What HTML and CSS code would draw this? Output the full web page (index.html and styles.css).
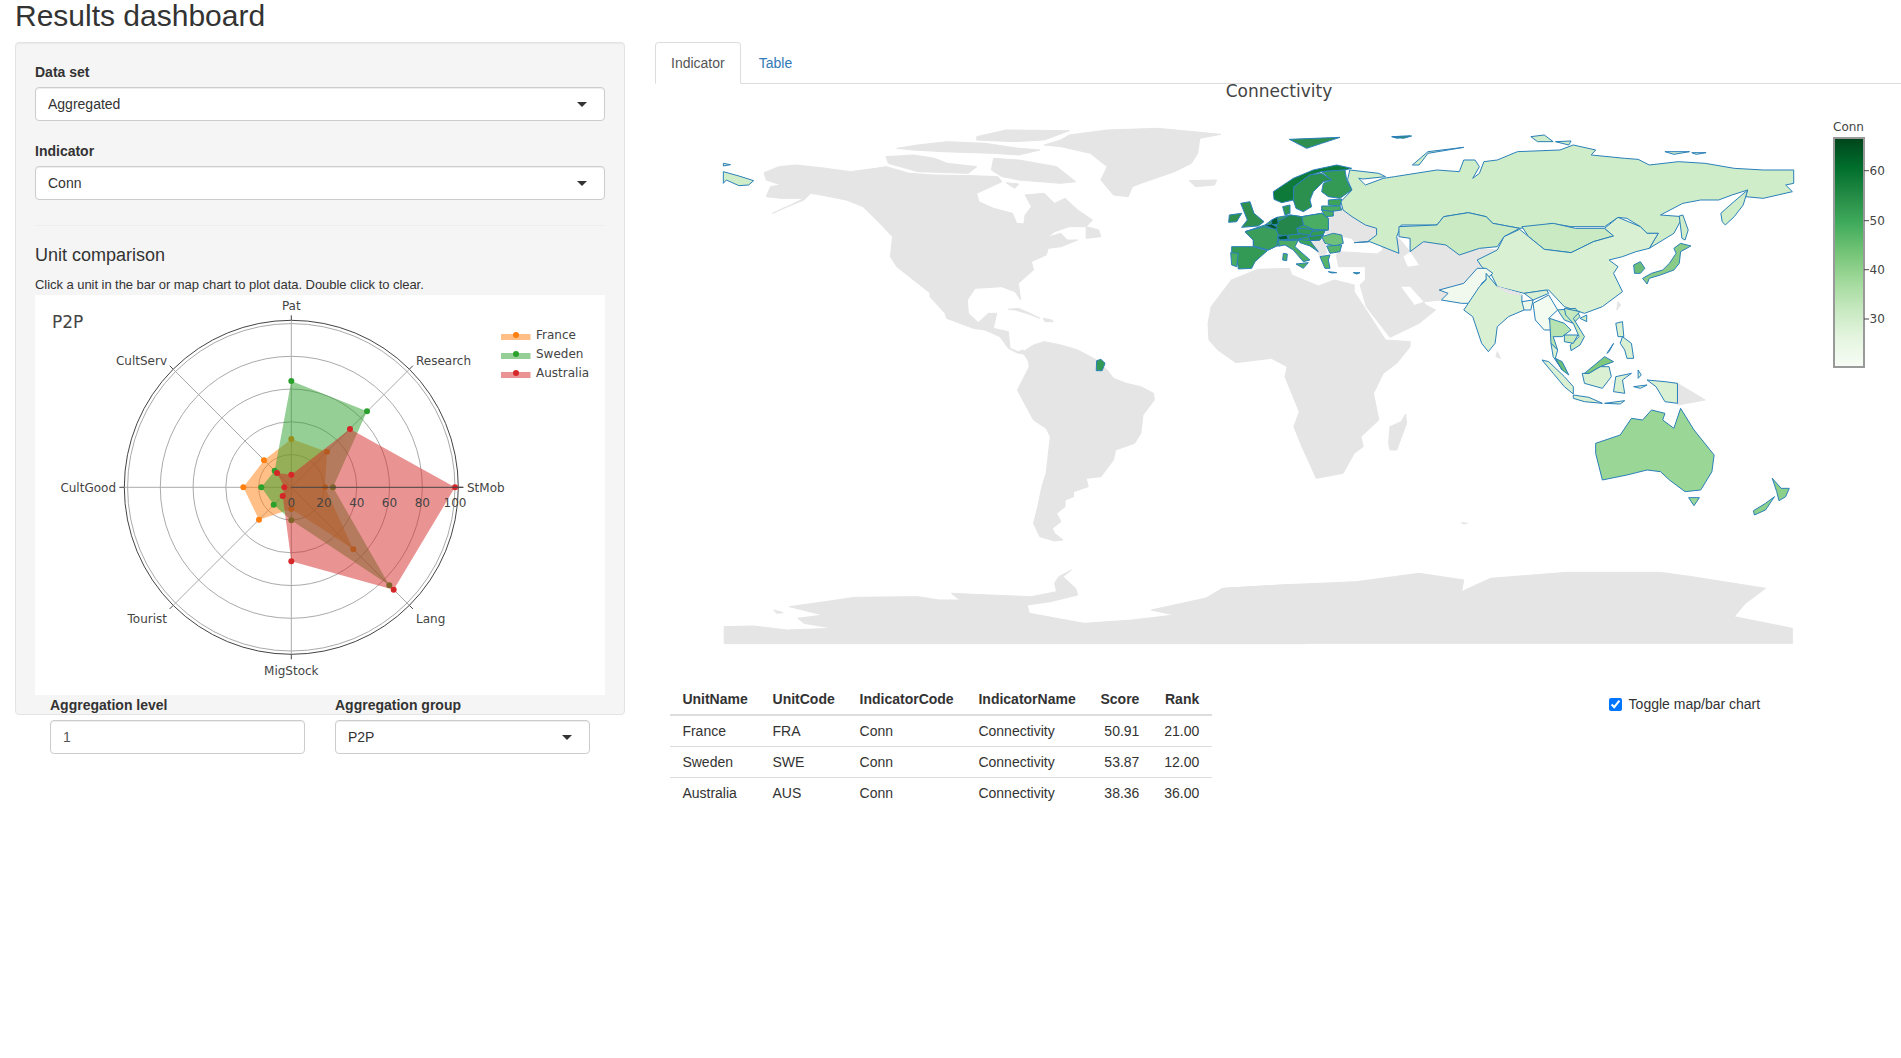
FILE: index.html
```html
<!DOCTYPE html>
<html lang="en">
<head>
<meta charset="utf-8">
<title>Results dashboard</title>
<link rel="stylesheet" href="styles.css">
</head>
<body>
<h2 class="page-title">Results dashboard</h2>
<div class="columns">
  <aside class="side-col">
    <div class="well">
      <div class="form-group">
        <label class="field-label">Data set</label>
        <div class="select-box"><span>Aggregated</span><i class="caret"></i></div>
      </div>
      <div class="form-group">
        <label class="field-label">Indicator</label>
        <div class="select-box"><span>Conn</span><i class="caret"></i></div>
      </div>
      <hr class="divider">
      <h4 class="section-title">Unit comparison</h4>
      <p class="hint">Click a unit in the bar or map chart to plot data. Double click to clear.</p>
      <svg class="radar" viewBox="35 295 570 400" width="570" height="400" role="img" aria-label="Radar chart">
        <rect class="plot-bg" x="35" y="295" width="570" height="400"/>
        <text class="plot-title" x="52" y="328">P2P</text>
        <circle class="grid" cx="291.3" cy="487.3" r="32.7"/>
        <circle class="grid" cx="291.3" cy="487.3" r="65.5"/>
        <circle class="grid" cx="291.3" cy="487.3" r="98.2"/>
        <circle class="grid" cx="291.3" cy="487.3" r="131"/>
        <circle class="grid" cx="291.3" cy="487.3" r="163.7"/>
        <circle class="ring" cx="291.3" cy="487.3" r="167"/>
        <path class="grid" d="M291.3 320.3V654.3M124.3 487.3H291.3M173.2 369.2L409.4 605.4M173.2 605.4L409.4 369.2"/>
        <path class="tick" d="M291.3 315.3V320.3M291.3 654.3V659.3M119.3 487.3H124.3M458.3 487.3H463.3M173.2 369.2L169.7 365.7M409.4 369.2L412.9 365.7M173.2 605.4L169.7 608.9M409.4 605.4L412.9 608.9"/>
        <g transform="translate(100 360) scale(.33333)">
          <polygon class="fill-fr" points="675,382 760,568 574,447 477,479 430,382 492,301 574,237 681,275"/>
          <g class="dots-fr">
            <circle cx="675" cy="382" r="9"/><circle cx="760" cy="568" r="9"/><circle cx="574" cy="447" r="9"/><circle cx="477" cy="479" r="9"/><circle cx="430" cy="382" r="9"/><circle cx="492" cy="301" r="9"/><circle cx="574" cy="237" r="9"/><circle cx="681" cy="275" r="9"/>
          </g>
          <polygon class="fill-se" points="699,382 868,676 574,481 521,434 484,382 524,332 574,63 801,154"/>
          <g class="dots-se">
            <circle cx="699" cy="382" r="9"/><circle cx="868" cy="676" r="9"/><circle cx="574" cy="481" r="9"/><circle cx="521" cy="434" r="9"/><circle cx="484" cy="382" r="9"/><circle cx="524" cy="332" r="9"/><circle cx="574" cy="63" r="9"/><circle cx="801" cy="154" r="9"/>
          </g>
          <polygon class="fill-au" points="1065,382 881,689 574,604 548,408 553,382 531,339 574,344 750,207"/>
          <g class="dots-au">
            <circle cx="1065" cy="382" r="9"/><circle cx="881" cy="689" r="9"/><circle cx="574" cy="604" r="9"/><circle cx="548" cy="408" r="9"/><circle cx="553" cy="382" r="9"/><circle cx="531" cy="339" r="9"/><circle cx="574" cy="344" r="9"/><circle cx="750" cy="207" r="9"/>
          </g>
        </g>
        <path class="axis" d="M291.3 487.3H463.3"/>
        <g class="tick-labels">
          <text x="291.3" y="507">0</text><text x="324" y="507">20</text><text x="356.8" y="507">40</text><text x="389.5" y="507">60</text><text x="422.3" y="507">80</text><text x="455" y="507">100</text>
        </g>
        <g class="axis-labels">
          <text class="mid" x="291.3" y="310">Pat</text>
          <text x="416" y="365">Research</text>
          <text x="467" y="491.5">StMob</text>
          <text x="416" y="623">Lang</text>
          <text class="mid" x="291.3" y="675">MigStock</text>
          <text class="end" x="167" y="623">Tourist</text>
          <text class="end" x="116" y="491.5">CultGood</text>
          <text class="end" x="167" y="365">CultServ</text>
        </g>
        <rect class="fill-fr" x="501" y="334" width="29.5" height="6"/><circle class="dots-fr" cx="516" cy="335" r="3"/>
        <text class="legend-text" x="536" y="339">France</text>
        <rect class="fill-se" x="501" y="353" width="29.5" height="6"/><circle class="dots-se" cx="516" cy="354" r="3"/>
        <text class="legend-text" x="536" y="358">Sweden</text>
        <rect class="fill-au" x="501" y="372" width="29.5" height="6"/><circle class="dots-au" cx="516" cy="373" r="3"/>
        <text class="legend-text" x="536" y="377">Australia</text>
      </svg>
      <div class="agg-row">
        <div class="agg-field">
          <label class="field-label">Aggregation level</label>
          <input class="text-input" type="text" value="1">
        </div>
        <div class="agg-field">
          <label class="field-label">Aggregation group</label>
          <div class="select-box"><span>P2P</span><i class="caret"></i></div>
        </div>
      </div>
    </div>
  </aside>
  <main class="main-col">
    <ul class="tabs">
      <li class="tab tab-active">Indicator</li>
      <li class="tab tab-link">Table</li>
    </ul>
    <svg class="map" viewBox="655 79 1246 605" width="1246" height="605" role="img" aria-label="World map of Connectivity">
      <defs>
        <linearGradient id="greens" x1="0" y1="1" x2="0" y2="0">
          <stop offset="0" stop-color="#f7fcf5"/><stop offset=".125" stop-color="#e5f5e0"/><stop offset=".25" stop-color="#c7e9c0"/><stop offset=".375" stop-color="#a1d99b"/><stop offset=".5" stop-color="#74c476"/><stop offset=".625" stop-color="#41ab5d"/><stop offset=".75" stop-color="#238b45"/><stop offset=".875" stop-color="#006d2c"/><stop offset="1" stop-color="#00441b"/>
        </linearGradient>
      </defs>
      <text class="map-title" x="1279" y="97">Connectivity</text>

      <!-- Americas, Greenland, west Antarctica -->
      <g transform="translate(640 30) scale(.42088 .33333)">
        <polygon class="land" points="295,428 330,410 370,405 430,413 500,425 560,415 585,410 640,430 700,435 790,437 850,440 860,455 800,490 805,515 840,535 885,550 895,580 912,582 915,555 930,530 915,495 960,490 985,520 1010,505 1040,540 1075,570 1060,590 1020,590 985,605 968,622 1000,610 1015,630 1040,630 1000,650 970,655 965,675 930,695 935,720 700,800 650,750 610,710 595,680 600,620 570,580 530,530 490,510 430,495 405,490 390,510 340,535 315,550 350,530 390,505 335,505 300,500 310,470 335,465 300,450"/>
        <polygon class="land" points="1020,315 1110,300 1230,295 1380,313 1330,325 1325,370 1310,400 1270,425 1190,460 1170,470 1160,500 1125,495 1095,450 1110,410 1070,370 1000,350 960,345 1000,330"/>
        <polygon class="land" points="800,320 870,300 1020,302 960,330 890,335 800,330"/>
        <polygon class="land" points="610,355 660,345 730,335 820,340 900,355 950,360 900,375 840,370 720,365 650,360"/>
        <polygon class="land" points="585,380 650,375 700,385 730,400 800,410 780,430 660,425 590,400"/>
        <polygon class="land" points="840,385 900,390 990,410 1035,455 1000,460 950,455 900,450 860,440 835,420"/>
        <polygon class="land" points="870,458 900,462 890,475"/>
        <polygon class="land" points="1305,452 1370,450 1365,465 1320,470"/>
        <polygon class="land" points="1060,590 1090,600 1095,620 1060,625"/>
        <polygon class="light" points="198,425 235,438 270,452 258,465 235,467 205,450 198,460"/>
        <polygon class="light" points="198,400 215,404 198,408"/>
      </g>
      <g transform="translate(640 340) scale(.42088 .33333)">
        <polygon class="land" points="905,40 935,15 960,5 1000,15 1040,30 1085,60 1110,90 1125,115 1155,130 1190,140 1220,160 1222,180 1195,225 1190,280 1175,310 1130,330 1125,360 1095,410 1060,415 1065,440 1030,455 1030,470 1010,480 1010,500 990,520 1000,545 980,565 985,580 1005,600 985,603 950,590 935,550 945,500 955,440 965,400 975,290 965,265 935,240 905,170 897,150 925,80 920,45"/>
        <polygon class="land" points="200,911 200,860 270,858 350,870 460,865 390,850 375,835 435,825 355,800 440,785 510,772 660,770 710,780 760,780 740,760 830,765 930,770 990,755 985,730 995,710 1025,690 1005,710 1035,745 1040,765 975,785 920,795 925,820 1055,850 1170,840 1270,825 1215,810 1360,770 1390,745 1530,735 1580,735 1580,911"/>
        <polygon class="land" points="318,810 340,818 325,820"/>
        <polygon class="coast" fill="#329a54" points="1085,62 1095,58 1105,70 1098,92 1084,92"/>
      </g>
      <!-- Central America -->
      <g transform="translate(930 270) scale(.33333)">
        <polygon class="land" points="0,0 310,0 265,40 272,90 255,65 215,50 135,55 112,90 115,130 145,158 175,130 200,130 190,175 235,185 240,235 265,245 280,240 300,280 280,250 265,250 235,235 210,200 165,180 130,175 50,145 45,130 0,80"/>
        <polygon class="land" points="235,118 265,115 300,130 330,145 290,130 255,120"/>
        <polygon class="land" points="340,145 365,150 370,155 345,155"/>
      </g>

      <!-- Africa, Asia base, Oceania, Antarctica east -->
      <g transform="translate(1200 110) scale(.44707 .33333)">
        <polygon class="land" points="18,640 25,590 70,510 130,478 200,475 205,495 265,528 300,510 345,525 345,545 415,690 470,695 470,710 440,760 410,790 388,850 400,930 360,980 365,1010 345,1030 320,1090 260,1105 250,1075 228,1010 210,950 222,905 190,800 195,770 160,745 80,758 40,720 20,690"/>
        <polygon class="land" points="460,912 462,940 440,1020 425,1020 422,1000 425,950 450,935"/>
        <polygon class="land" points="320,290 345,320 395,355 400,380 445,385 470,425 500,395 550,405 580,435 625,415 665,420 620,450 630,470 620,480 590,520 535,540 555,550 540,570 500,575 505,585 527,600 490,640 425,682 372,590 358,525 370,510 370,470 310,470 305,435 310,425 350,428 395,432 410,420 400,395 345,395 340,385 280,370 265,340 285,305"/>
        <polygon class="water" points="455,440 470,425 490,465 465,470"/>
        <polygon class="water" points="450,530 470,530 500,575 480,585"/>
        <polygon class="land" points="665,725 672,745 662,740"/>
        <polygon class="land" points="935,575 941,585 932,600"/>
        <polygon class="land" points="1068,820 1130,870 1068,885"/>
        <polygon class="land" points="0,1475 50,1435 180,1425 350,1415 490,1390 590,1410 585,1445 650,1405 820,1387 1030,1387 1100,1400 1265,1435 1220,1480 1195,1520 1325,1555 1325,1600 0,1600"/>
        <polygon class="land" points="585,1238 598,1240 590,1242"/>
      </g>
      <g transform="translate(1190 120) scale(.33333)">
        <polygon class="land" points="345,360 395,350 405,370 410,400 390,410 385,400 360,375"/>
      </g>

      <!-- Asia, coloured -->
      <g transform="translate(1200 110) scale(.44707 .33333)">
        <polygon class="coast" fill="#d0edca" points="335,180 400,190 415,200 365,207 355,205 370,225 410,205 435,200 530,180 580,185 590,150 615,150 625,170 610,205 625,190 635,155 665,150 710,125 805,120 835,105 885,120 875,135 950,145 980,148 1005,165 1070,155 1130,160 1195,175 1260,180 1328,180 1328,220 1310,225 1325,245 1260,265 1220,260 1225,240 1190,255 1160,270 1120,270 1080,280 1030,315 1080,320 1060,370 1005,415 1025,370 1000,370 985,350 955,325 935,322 905,350 830,350 785,340 760,350 715,355 655,340 640,320 600,308 545,320 530,345 450,345 440,380 445,430 380,395 345,398 375,395 395,375 395,355 370,345 340,320 320,300 315,275 340,240 330,210"/>
        <polygon class="coast" fill="#c9eac2" points="445,350 530,345 545,320 600,308 640,320 655,340 715,355 680,380 665,410 625,415 580,435 550,405 500,395 470,425 470,385 445,380"/>
        <polygon class="coast" fill="#c9eac2" points="720,350 790,340 840,355 905,355 925,378 880,395 830,428 770,418 735,380"/>
        <polygon class="coast" fill="#d9f0d3" points="715,358 735,380 770,418 830,428 880,395 925,378 905,355 935,322 985,350 1000,370 1025,370 1005,415 975,425 945,440 915,450 935,470 925,490 945,545 900,590 860,610 815,590 780,540 725,550 665,530 650,490 630,470 620,450 665,420 680,380"/>
        <polygon class="coast" fill="#f1f9ee" points="535,540 590,520 620,475 640,475 655,490 630,520 610,580 585,580 540,570 555,550"/>
        <polygon class="coast" fill="#d9f0d3" points="640,490 665,530 720,555 720,575 745,575 725,600 690,620 665,650 660,700 645,725 630,700 610,620 590,600 600,580 625,530 640,510"/>
        <polygon class="land" points="665,530 715,550 720,555 690,550"/>
        <polygon class="coast" fill="#eef8ea" points="720,575 745,570 740,600 725,600"/>
        <polygon class="coast" fill="#d9f0d3" points="725,550 775,540 780,550 745,570"/>
        <polygon class="coast" fill="#f3faf0" points="745,580 780,555 800,600 780,625 790,660 770,660 750,630"/>
        <polygon class="coast" fill="#b7e2b1" points="782,625 815,640 830,660 810,680 790,680 800,720 785,700"/>
        <polygon class="coast" fill="#c7e9c0" points="800,600 840,595 850,620 835,640 815,630"/>
        <polygon class="coast" fill="#c7e9c0" points="815,595 850,605 835,625 860,680 850,705 830,722 828,705 848,680 835,640 818,615"/>
        <polygon class="coast" fill="#c7e9c0" points="815,675 845,675 835,700 815,695"/>
        <polygon class="coast" fill="#d9f0d3" points="785,700 800,720 795,745 810,780 790,740"/>
        <polygon class="coast" fill="#6dbf78" points="795,745 810,755 825,795 810,780"/>
        <polygon class="coast" fill="#d9f0d3" points="765,750 780,755 815,800 835,830 835,852 815,830 790,790"/>
        <polygon class="coast" fill="#d9f0d3" points="835,855 870,862 900,880 860,875 835,865"/>
        <polygon class="coast" fill="#d9f0d3" points="855,790 870,790 895,770 915,770 920,800 900,835 860,820"/>
        <polygon class="coast" fill="#7fc97f" points="860,790 905,740 925,755 895,770 870,790"/>
        <polygon class="coast" fill="#d9f0d3" points="930,800 965,790 945,810 950,850 925,845"/>
        <polygon class="coast" fill="#d9f0d3" points="930,640 945,635 948,680 935,680"/>
        <polygon class="coast" fill="#d9f0d3" points="945,680 965,700 970,745 955,745 950,720 940,700"/>
        <polygon class="coast" fill="#d9f0d3" points="1000,810 1040,815 1068,820 1068,880 1040,875 1020,830"/>
        <polygon class="coast" fill="#d9f0d3" points="910,730 925,700 915,725"/>
        <polygon class="coast" fill="#d9f0d3" points="905,880 950,872 940,882"/>
        <polygon class="coast" fill="#d9f0d3" points="970,830 1000,825 985,835"/>
        <polygon class="coast" fill="#d9f0d3" points="980,780 987,795 980,805"/>
        <polygon class="coast" fill="#8acb88" points="990,505 1010,490 1035,480 1050,460 1065,430 1060,415 1075,400 1098,408 1075,425 1072,460 1060,480 1030,495 1005,505 1000,522"/>
        <polygon class="coast" fill="#d0edca" points="1072,318 1080,315 1092,360 1085,390 1078,385"/>
        <polygon class="coast" fill="#6bbd78" points="970,465 985,455 995,475 985,490 972,490"/>
        <polygon class="coast" fill="#d0edca" points="1165,310 1190,280 1225,240 1215,285 1195,320 1175,345 1168,335"/>
        <polygon class="coast" fill="#d0edca" points="475,165 510,125 590,112 510,130 490,165"/>
        <polygon class="coast" fill="#d0edca" points="740,80 770,75 790,95 755,95"/>
        <polygon class="coast" fill="#d0edca" points="795,95 830,93 825,105"/>
        <polygon class="coast" fill="#d0edca" points="1040,125 1095,125 1060,133"/>
        <polygon class="coast" fill="#d0edca" points="1100,128 1132,128 1110,133"/>
        <polygon class="coast" fill="#d0edca" points="430,80 470,78 440,85"/>
        <polygon class="coast" fill="#d0edca" points="850,625 865,615 865,635"/>
      </g>

      <!-- Oceania -->
      <g transform="translate(1200 340) scale(.44707 .33333)">
        <polygon class="coast" fill="#9ad695" points="885,310 940,285 965,235 990,240 1010,210 1040,220 1035,240 1060,265 1075,205 1105,270 1150,345 1145,395 1120,450 1085,455 1050,420 1030,395 1000,390 955,405 900,420 885,340"/>
        <polygon class="coast" fill="#9ad695" points="1093,473 1117,473 1105,497"/>
        <polygon class="coast" fill="#8ccf8a" points="1280,415 1300,445 1318,445 1310,470 1295,482 1290,455"/>
        <polygon class="coast" fill="#8ccf8a" points="1285,470 1265,510 1240,525 1238,512 1265,490"/>
      </g>

      <!-- Europe -->
      <g transform="translate(1190 120) scale(.33333)">
        <polygon class="coast" fill="#2e8f4f" points="298,58 450,52 395,70 350,85"/>
        <polygon class="coast" fill="#2e8f4f" points="605,50 665,48 640,55"/>
        <polygon class="coast" fill="#3a9e5a" points="165,335 225,315 245,300 262,292 300,285 335,290 395,280 415,295 415,330 405,332 395,350 390,360 360,362 325,362 295,362 268,378 260,378 235,390 190,378 190,360"/>
        <polygon class="coast" fill="#0e7a3a" points="250,215 310,175 370,150 440,135 485,145 465,150 395,155 360,165 312,200 310,240 275,248 252,238"/>
        <polygon class="coast" fill="#2b8f4e" points="312,200 360,165 395,160 425,180 400,185 370,215 360,240 365,260 340,275 318,265 310,240"/>
        <polygon class="coast" fill="#329a54" points="425,180 395,155 465,150 470,180 485,210 450,235 415,230 395,215 400,190"/>
        <polygon class="coast" fill="#2e9650" points="278,260 300,255 300,280 285,285"/>
        <polygon class="coast" fill="#3ba35a" points="415,240 455,237 450,258 415,255"/>
        <polygon class="coast" fill="#4aab63" points="395,258 450,258 455,270 420,275 395,270"/>
        <polygon class="coast" fill="#4aab63" points="395,270 430,275 430,288 405,290"/>
        <polygon class="coast" fill="#49ad63" points="335,290 395,280 415,295 415,330 370,328 340,315"/>
        <polygon class="coast" fill="#24864a" points="262,305 300,285 335,290 340,315 320,325 325,340 310,350 265,345 258,325"/>
        <polygon class="coast" fill="#005a2c" points="245,300 262,292 265,312 245,315"/>
        <polygon class="coast" fill="#00552a" points="225,315 245,312 262,322 255,330"/>
        <polygon class="coast" fill="#3a9e5a" points="165,335 220,320 258,328 265,345 260,378 235,390 190,378 190,360"/>
        <polygon class="coast" fill="#00592b" points="262,350 290,345 295,358 270,360"/>
        <polygon class="coast" fill="#2e904f" points="295,345 355,340 355,350 320,358 295,358"/>
        <polygon class="coast" fill="#339a55" points="320,325 370,328 360,345 325,340"/>
        <polygon class="coast" fill="#339a55" points="365,335 405,330 400,345 360,350"/>
        <polygon class="coast" fill="#2e904f" points="355,350 400,345 390,360 360,362"/>
        <polygon class="coast" fill="#3ba35a" points="325,358 360,362 385,395 360,378 330,368"/>
        <polygon class="coast" fill="#2e8f4f" points="152,250 180,245 192,280 222,305 205,318 155,322 172,300 165,282"/>
        <polygon class="coast" fill="#2e8f4f" points="118,285 155,280 140,305 116,307"/>
        <polygon class="coast" fill="#339a55" points="125,380 190,380 232,392 195,425 185,445 145,447 140,410 125,400"/>
        <polygon class="coast" fill="#4aab63" points="122,398 145,400 140,440 125,435"/>
        <polygon class="coast" fill="#4cac66" points="265,360 295,362 325,360 315,380 360,420 340,425 310,390 285,375 268,378"/>
        <polygon class="coast" fill="#4cac66" points="318,432 355,428 340,445"/>
        <polygon class="coast" fill="#4cac66" points="280,400 292,402 290,422 278,420"/>
        <polygon class="coast" fill="#6ec07a" points="395,350 430,340 455,345 460,370 435,378 405,370"/>
        <polygon class="coast" fill="#55b36b" points="410,378 455,375 450,395 420,400"/>
        <polygon class="coast" fill="#55b36b" points="390,410 420,405 415,420 420,445 405,445"/>
        <polygon class="coast" fill="#3ba35a" points="415,455 440,458 425,459"/>
        <polygon class="coast" fill="#3ba35a" points="490,458 510,458 500,462"/>
      </g>

      <rect class="bar" x="1834" y="138" width="30" height="229" fill="url(#greens)"/>
      <path class="tick" d="M1864 170.7h5M1864 220.7h5M1864 269.7h5M1864 319h5"/>
      <text class="bar-title" x="1848.5" y="131">Conn</text>
      <g class="legend-text">
        <text x="1869.5" y="175">60</text><text x="1869.5" y="225">50</text><text x="1869.5" y="274">40</text><text x="1869.5" y="323">30</text>
      </g>
    </svg>
    <div class="below-map">
      <table class="data-table">
        <thead>
          <tr><th>UnitName</th><th>UnitCode</th><th>IndicatorCode</th><th>IndicatorName</th><th class="num">Score</th><th class="num">Rank</th></tr>
        </thead>
        <tbody>
          <tr><td>France</td><td>FRA</td><td>Conn</td><td>Connectivity</td><td class="num">50.91</td><td class="num">21.00</td></tr>
          <tr><td>Sweden</td><td>SWE</td><td>Conn</td><td>Connectivity</td><td class="num">53.87</td><td class="num">12.00</td></tr>
          <tr><td>Australia</td><td>AUS</td><td>Conn</td><td>Connectivity</td><td class="num">38.36</td><td class="num">36.00</td></tr>
        </tbody>
      </table>
      <label class="toggle"><input class="toggle-box" type="checkbox" checked>Toggle map/bar chart</label>
    </div>
  </main>
</div>
</body>
</html>
```
FILE: styles.css
```css
* { box-sizing: border-box; }
html, body { margin: 0; padding: 0; }
body {
  font-family: "Liberation Sans", Arial, sans-serif;
  font-size: 14px;
  line-height: 20px;
  color: #333;
  background: #fff;
  overflow: hidden;
  height: 1058px;
}
.page-title {
  margin: -1px 0 10px;
  padding-left: 15px;
  font-size: 30px;
  font-weight: 400;
  line-height: 33px;
}
.columns { display: flex; align-items: flex-start; }
.side-col { flex: 0 0 640px; padding: 0 15px; }
.main-col { flex: 1 1 0; min-width: 0; padding-left: 15px; }

.well {
  height: 673px;
  padding: 19px;
  background: #f5f5f5;
  border: 1px solid #e3e3e3;
  border-radius: 4px;
  box-shadow: inset 0 1px 1px rgba(0, 0, 0, .05);
}
.form-group { margin-bottom: 20px; }
.field-label { display: block; margin-bottom: 5px; font-weight: 700; }
.select-box {
  display: flex;
  align-items: center;
  justify-content: space-between;
  height: 34px;
  padding: 6px 12px;
  background: #fff;
  border: 1px solid #ccc;
  border-radius: 4px;
  box-shadow: inset 0 1px 1px rgba(0, 0, 0, .075);
}
.caret {
  width: 0;
  height: 0;
  margin-right: 5px;
  border-style: solid;
  border-width: 5px 5px 0;
  border-color: #333 transparent transparent;
}
.divider { margin: 25px 0 19px; border: 0; border-top: 1px solid #eee; }
.section-title { margin: 0 0 10px; font-size: 18px; font-weight: 400; line-height: 20px; }
.hint { margin: 0; font-size: 13px; letter-spacing: -.05px; }
.radar { display: block; }
.plot-bg { fill: #fff; }
.plot-title { font: 17px "DejaVu Sans", sans-serif; fill: #444; }
.grid { fill: none; stroke: #aaa; stroke-width: 1; }
.ring { fill: none; stroke: #444; stroke-width: 1; }
.tick { fill: none; stroke: #444; stroke-width: 1; }
.axis { fill: none; stroke: #444; stroke-width: 1; }
.fill-fr { fill: #ff7f0e; fill-opacity: .5; }
.fill-se { fill: #2ca02c; fill-opacity: .5; }
.fill-au { fill: #d62728; fill-opacity: .5; }
.dots-fr { fill: #ff7f0e; }
.dots-se { fill: #2ca02c; }
.dots-au { fill: #d62728; }
.tick-labels text { font: 12px "DejaVu Sans", sans-serif; fill: #444; text-anchor: middle; }
.axis-labels text { font: 12px "DejaVu Sans", sans-serif; fill: #444; }
.axis-labels .mid { text-anchor: middle; }
.axis-labels .end { text-anchor: end; }
.legend-text, .legend-text text { font: 12px "DejaVu Sans", sans-serif; fill: #444; }

.agg-row { display: flex; gap: 30px; padding: 0 15px; }
.agg-field { flex: 1 1 0; min-width: 0; }
.text-input {
  display: block;
  width: 100%;
  height: 34px;
  padding: 6px 12px;
  font: inherit;
  color: #555;
  background: #fff;
  border: 1px solid #ccc;
  border-radius: 4px;
  box-shadow: inset 0 1px 1px rgba(0, 0, 0, .075);
}

.tabs {
  display: flex;
  gap: 2px;
  height: 42px;
  margin: 0;
  padding: 0;
  list-style: none;
  border-bottom: 1px solid #ddd;
}
.tab { height: 42px; padding: 10px 15px; border: 1px solid transparent; border-radius: 4px 4px 0 0; }
.tab-active { color: #555; background: #fff; border-color: #ddd #ddd #fff; }
.tab-link { color: #337ab7; }

.map { display: block; margin-top: -5px; position: relative; }
.map-title { font: 17px "DejaVu Sans", sans-serif; fill: #444; text-anchor: middle; }
.bar-title { font: 12px "DejaVu Sans", sans-serif; fill: #444; text-anchor: middle; }
.bar { stroke: #999; stroke-width: 2; }
.land { fill: #e5e5e5; stroke: #e5e5e5; stroke-width: 1; stroke-linejoin: round; vector-effect: non-scaling-stroke; }
.water { fill: #fff; }
.light { fill: #d0edca; stroke: #2a80b9; stroke-width: 1; vector-effect: non-scaling-stroke; }
.coast { stroke: #2a80b9; stroke-width: 1; vector-effect: non-scaling-stroke; stroke-linejoin: round; }

.below-map { display: flex; align-items: flex-start; padding-left: 15px; }
.data-table { border-collapse: collapse; border-spacing: 0; }
.data-table th, .data-table td { padding: 5px 12.4px; text-align: left; white-space: nowrap; }
.data-table thead th { border-bottom: 2px solid #ddd; font-weight: 700; }
.data-table tbody td { border-top: 1px solid #ddd; }
.data-table tbody tr:first-child td { border-top: 0; }
.data-table .num { text-align: right; }
.toggle { display: flex; align-items: center; margin: 10px 0 0 397px; white-space: nowrap; }
.toggle-box { width: 13px; height: 13px; margin: 0 7px 0 0; }
```
